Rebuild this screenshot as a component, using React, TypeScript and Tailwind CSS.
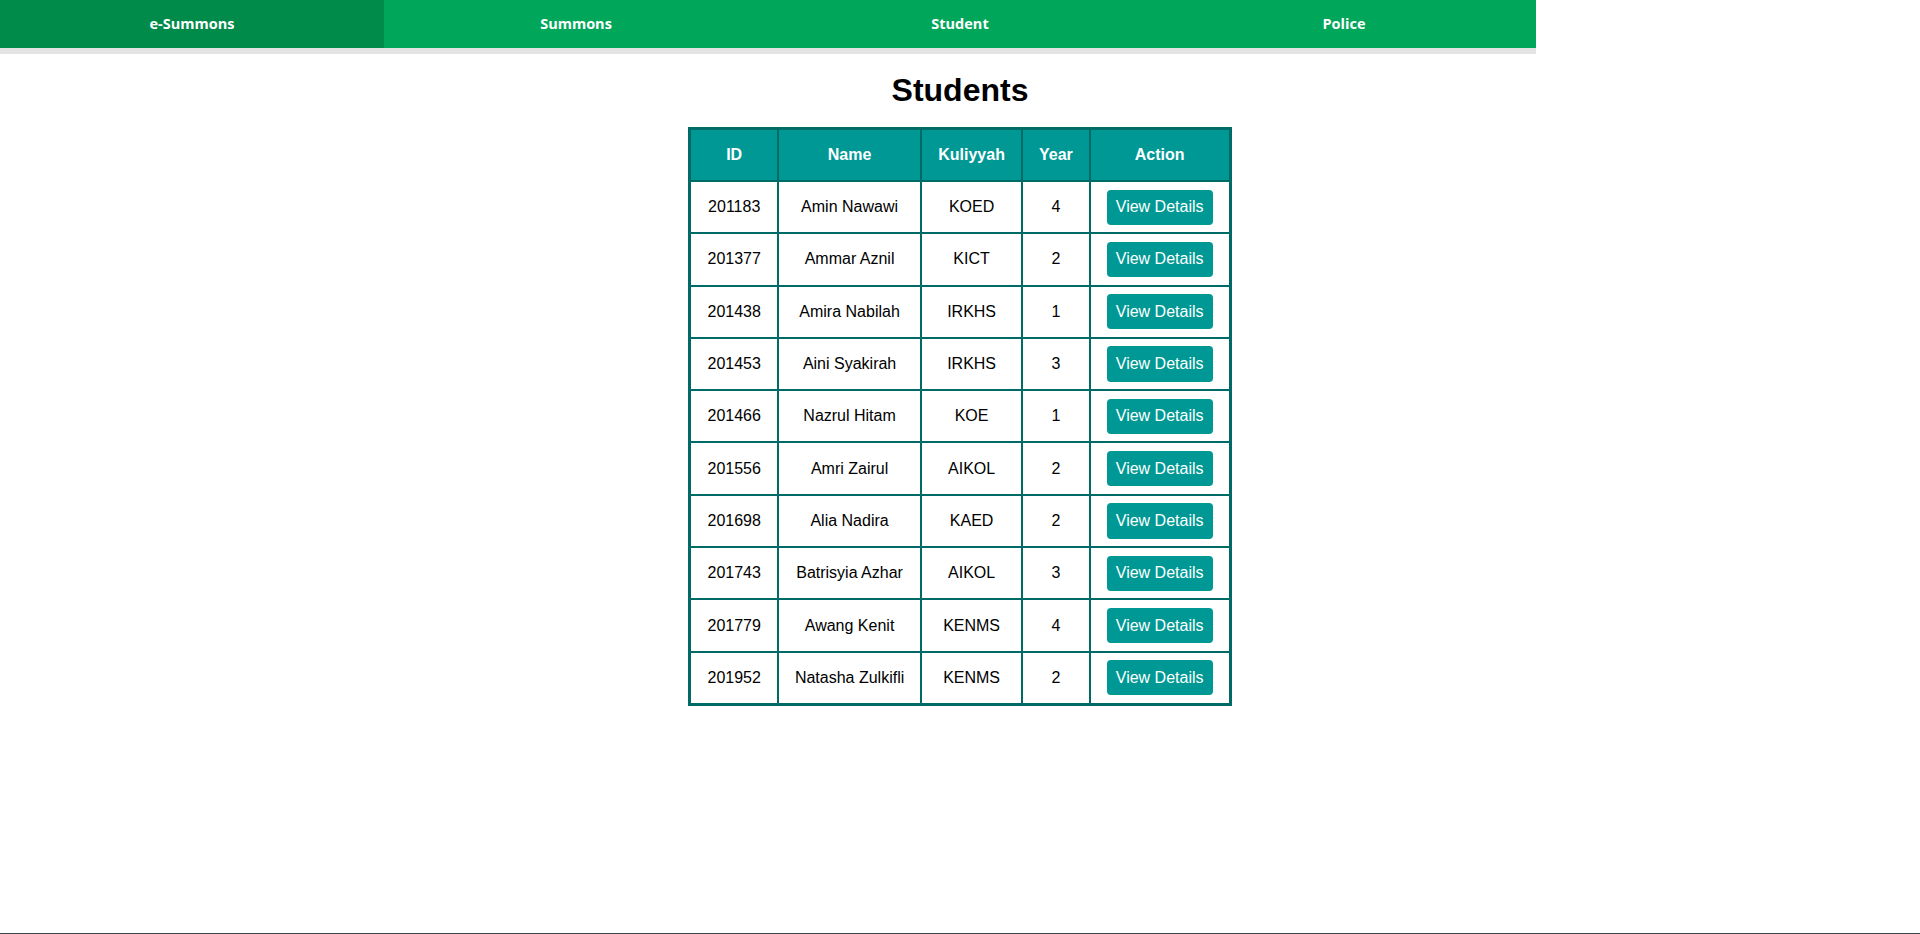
import { FC } from "react"

interface Student {
  id: string
  name: string
  kuliyyah: string
  year: number
}

const students: Student[] = [
  { id: "201183", name: "Amin Nawawi", kuliyyah: "KOED", year: 4 },
  { id: "201377", name: "Ammar Aznil", kuliyyah: "KICT", year: 2 },
  { id: "201438", name: "Amira Nabilah", kuliyyah: "IRKHS", year: 1 },
  { id: "201453", name: "Aini Syakirah", kuliyyah: "IRKHS", year: 3 },
  { id: "201466", name: "Nazrul Hitam", kuliyyah: "KOE", year: 1 },
  { id: "201556", name: "Amri Zairul", kuliyyah: "AIKOL", year: 2 },
  { id: "201698", name: "Alia Nadira", kuliyyah: "KAED", year: 2 },
  { id: "201743", name: "Batrisyia Azhar", kuliyyah: "AIKOL", year: 3 },
  { id: "201779", name: "Awang Kenit", kuliyyah: "KENMS", year: 4 },
  { id: "201952", name: "Natasha Zulkifli", kuliyyah: "KENMS", year: 2 },
]

const NavItem: FC<{ title: string; active?: boolean }> = ({ title, active }) => {
  return (
    <a
      href="#"
      className={
        active
          ? "flex-1 h-12 flex items-center justify-center text-white text-[14.5px] font-bold bg-[#008b4a]"
          : "flex-1 h-12 flex items-center justify-center text-white text-[14.5px] font-bold bg-[#00a65a]"
      }
    >
      {title}
    </a>
  )
}

const App: FC = () => {
  return (
    <div className="h-[934px] flex flex-col bg-white">
      <nav className="w-[1536px] flex border-b-[6px] border-[#e4e4e4] font-['Open_Sans',sans-serif]">
        <NavItem title="e-Summons" active />
        <NavItem title="Summons" />
        <NavItem title="Student" />
        <NavItem title="Police" />
      </nav>

      <div className="flex flex-col items-center font-['Liberation_Sans',Arial,sans-serif] text-black">
        <h1 className="mt-[18px] mb-[18px] text-[32px] leading-[37px] font-bold">Students</h1>
        <table className="border-collapse border-[3px] border-[#006b66] text-[16px] text-center">
          <thead>
            <tr className="bg-[#009894] text-white">
              <th className="border-2 border-[#006b66] px-4 py-4 leading-[18px] font-bold">ID</th>
              <th className="border-2 border-[#006b66] px-4 py-4 leading-[18px] font-bold">Name</th>
              <th className="border-2 border-[#006b66] px-4 py-4 leading-[18px] font-bold">Kuliyyah</th>
              <th className="border-2 border-[#006b66] px-4 py-4 leading-[18px] font-bold">Year</th>
              <th className="border-2 border-[#006b66] px-4 py-4 leading-[18px] font-bold">Action</th>
            </tr>
          </thead>
          <tbody>
            {students.map((s) => (
              <tr key={s.id}>
                <td className="border-2 border-[#006b66] px-4 py-[7.5px]">{s.id}</td>
                <td className="border-2 border-[#006b66] px-4 py-[7.5px]">{s.name}</td>
                <td className="border-2 border-[#006b66] px-4 py-[7.5px]">{s.kuliyyah}</td>
                <td className="border-2 border-[#006b66] px-4 py-[7.5px]">{s.year}</td>
                <td className="border-2 border-[#006b66] px-4 py-[7.5px]">
                  <button className="h-[35.3px] px-[9px] rounded-[4px] bg-[#009894] text-white text-[16px] leading-[18px]">
                    View Details
                  </button>
                </td>
              </tr>
            ))}
          </tbody>
        </table>
      </div>

      <div className="mt-auto h-px bg-[#3a4747]" />
    </div>
  )
}

export default App
